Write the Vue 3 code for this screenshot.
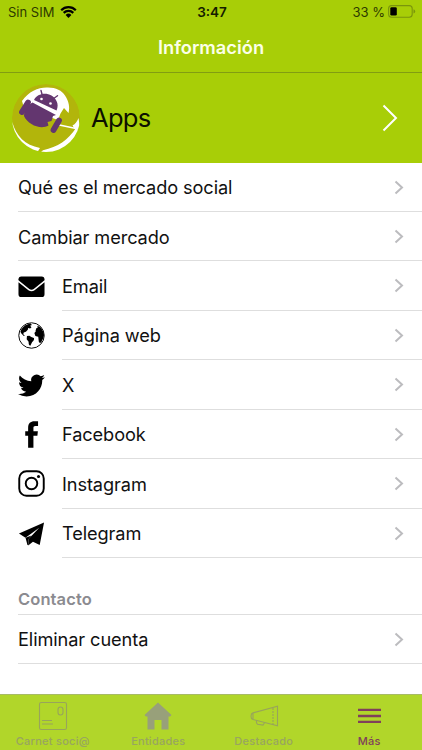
<template>
    <div class="screen">
        <div class="status">
            <div class="carrier">
                <span>Sin SIM</span>
                <svg class="wifi" viewBox="0 0 17 12">
                    <path d="M1.2 4.2a10.3 10.3 0 0 1 14.6 0" />
                    <path d="M3.7 6.9a6.8 6.8 0 0 1 9.6 0" />
                    <path class="dot" d="M5.6 9a4.1 4.1 0 0 1 5.8 0L8.500 12z" />
                </svg>
            </div>
            <b class="clock">3:47</b>
            <div class="power">
                <span>33 %</span>
                <svg class="battery" viewBox="0 0 28 13">
                    <rect class="shell" x=".6" y=".6" width="23.600" height="11.600" rx="3" />
                    <rect x="2.300" y="2.300" width="6.500" height="8.300" rx="1.300" />
                    <path class="tip" d="M25.500 4.300q1.700.6 1.700 2.100t-1.700 2.100z" />
                </svg>
            </div>
        </div>

        <h1 class="title">Información</h1>

        <div class="profile">
            <svg class="avatar" viewBox="0 0 68 68">
                <circle cx="34" cy="34" r="34" fill="#b2b50b" />
                <g fill="#fff">
                    <path d="M10 17C17 7 27 3 36 3.500c8 0 14 3 17 8 4 6 5 12 3.500 17.500l-4.500-5-3.500 5.500L46 36 12 24z" />
                    <path d="M.3 38C4 52 13 61 28 64L25.500 68H14L0 54z" />
                    <path d="M29 68l2-1.800C46 63 56 56 64 44l4 5-12 19z" />
                    <path d="M60.500 41.500c3-1.500 4.500-4 6-7.500L68 44l-4 3z" />
                </g>
                <path stroke="#fff" stroke-width="1.600" d="M45 40.500l19 4" />
                <g fill="#63366f">
                    <path d="M22 16C26 7.500 40 7.500 44.500 17c1.500 3 1.500 6 0 9.500z" />
                    <path d="M20.500 18.500L44 31l-3 1-1.500 5-4 1 1 3.500C29 46 16 41 12 32c0-5 4-11 8.500-13.500z" />
                </g>
                <path class="limbs" d="M16 18.500l-6 9.500M47 36.500L41.500 46" />
                <path class="antennae" d="M30.500 12l-1.500-5.500M41 15l4.500-3.300" />
                <g fill="#fff"><circle cx="29.500" cy="15" r="1.300" /><circle cx="38.500" cy="19.500" r="1.300" /></g>
            </svg>
            <span class="name">Apps</span>
            <svg class="go" viewBox="0 0 16 28"><path d="M1.500 1.500L14 14 1.500 26.500" /></svg>
        </div>

        <div class="list">
            <div v-for="row in rows" :key="row.label" class="row">
                <div v-if="row.icon" class="icon">
                    <svg v-if="row.icon == 'email'" viewBox="0 0 28 28">
                        <path d="M3.500 3.500h21q3 0 3 3v1L16.300 16.600q-2.300 1.700-4.600 0L.5 7.500v-1q0-3 3-3z" />
                        <path d="M.5 9.700l10.300 8.200q3.200 2.300 6.400 0L27.500 9.700V22q0 3-3 3h-21q-3 0-3-3z" />
                    </svg>
                    <svg v-if="row.icon == 'web'" viewBox="0 0 28 28">
                        <circle cx="14" cy="14" r="13.200" fill="#fff" stroke="#000" />
                        <path d="M3.500 7.500C6 4 9 2 13 1.500l1.500 1.500-2 .8 1.500 1.700-1.500 1.300-2-.6-.3 1.800-2 2.200-2.200.8-.6 1.700 1.700 1.300-1.100.5L3.500 12 2.500 10z" />
                        <path d="M9.300 14.500l2.500-.3 2 1.300 2.700 1c.8 1.500-.6 3.300-1.800 4.300l-1.900 3.700c-1.600 0-1.800-1.700-1.800-4L9 18z" />
                        <path d="M18.200 9l.8-2.500 1.500-.8-.5-1.700 3 1.200c2 2.200 3.800 5 4 8.500l-1 3.500-2 4c-1.500 1-2.500 0-2.500-1.500l-.5-4.500-3-.7-1-3 1.500-2z" />
                    </svg>
                    <svg v-if="row.icon == 'twitter'" viewBox="0 0 24 24">
                        <path d="M23.950 4.570a10 10 0 0 1-2.820.77 4.960 4.960 0 0 0 2.160-2.720c-.95.550-2 .95-3.130 1.180a4.920 4.920 0 0 0-8.380 4.480C7.690 8.090 4.070 6.130 1.640 3.160a4.820 4.820 0 0 0-.67 2.480c0 1.710.87 3.210 2.190 4.100a4.900 4.900 0 0 1-2.230-.62v.06a4.920 4.920 0 0 0 3.950 4.830 5 5 0 0 1-2.210.08 4.940 4.940 0 0 0 4.600 3.420A9.870 9.870 0 0 1 0 19.540a14 14 0 0 0 7.550 2.210c9.050 0 14-7.500 14-13.980 0-.21 0-.42-.02-.63a9.940 9.940 0 0 0 2.420-2.570z" />
                    </svg>
                    <svg v-if="row.icon == 'facebook'" viewBox="0 0 28 28">
                        <path d="M10.500 27.700V15.200H7.500v-4.700h3V7c0-4.500 2.500-6.700 6.500-6.700h3.800v5H18c-1.400 0-2 .7-2 2v3.200h4.600l-.5 4.700H16v12.500z" />
                    </svg>
                    <svg v-if="row.icon == 'instagram'" class="outline" viewBox="0 0 28 28">
                        <rect x="1.300" y="1.300" width="25.400" height="25.400" rx="7.500" />
                        <circle cx="14" cy="14" r="6" />
                        <circle class="lens" cx="21.300" cy="6.800" r="1.600" />
                    </svg>
                    <svg v-if="row.icon == 'telegram'" viewBox="0 0 28 28">
                        <path d="M1 14L27 2.500l-4.500 23.500-7-3.500-4.300 3.500-.5-6L22 8 7.800 18.500z" />
                        <path d="M7.800 18.500l2 7.500 1.500.3-.6-6L14 16z" />
                    </svg>
                </div>
                <div class="cell">
                    <span>{{ row.label }}</span>
                    <svg class="chevron" viewBox="0 0 10 15"><path d="M1.500 1.500L8 7.500l-6.500 6" /></svg>
                </div>
            </div>

            <h2 class="section">Contacto</h2>
            <div class="row">
                <div class="cell">
                    <span>Eliminar cuenta</span>
                    <svg class="chevron" viewBox="0 0 10 15"><path d="M1.500 1.500L8 7.500l-6.500 6" /></svg>
                </div>
            </div>
        </div>

        <div class="tabs">
            <div class="tab">
                <svg viewBox="0 0 30 30">
                    <rect x="1.500" y="1.500" width="27" height="27" rx="1.800" />
                    <rect x="20" y="6" width="5" height="8" rx="2.500" />
                    <path d="M4 19.500h10M4 23h11" />
                </svg>
                <span>Carnet soci@</span>
            </div>
            <div class="tab">
                <svg viewBox="0 0 30 30">
                    <path class="fill" d="M15 1.500L28.500 14l-1.300 1.500h-1.700v13h-7V19h-7v9.500h-7v-13H2.800L1.500 14z" />
                </svg>
                <span>Entidades</span>
            </div>
            <div class="tab">
                <svg viewBox="0 0 30 30">
                    <path d="M28.500 5.200v19.600L4 18.500q-2-.6-2-3.300t2-3.300zM4 12v6.500" />
                    <path d="M7.500 19.500v2.300l1 1.500 5.500.8 1.500-2.300" />
                    <path class="dash" d="M24 7v17" />
                </svg>
                <span>Destacado</span>
            </div>
            <div class="tab active">
                <svg viewBox="0 0 30 30"><path class="bars" d="M4 8.800h23M4 15h23M4 20.800h23" /></svg>
                <span>Más</span>
            </div>
        </div>
    </div>
</template>

<script setup>
    const rows = [
        { label: "Qué es el mercado social" },
        { label: "Cambiar mercado" },
        { label: "Email", icon: "email" },
        { label: "Página web", icon: "web" },
        { label: "X", icon: "twitter" },
        { label: "Facebook", icon: "facebook" },
        { label: "Instagram", icon: "instagram" },
        { label: "Telegram", icon: "telegram" }
    ];
</script>

<style>
    body{
        margin: 0;
        overflow: hidden;
    }
</style>

<style scoped>
    .screen{
        width: 422px;
        height: 750px;
        display: flex;
        flex-direction: column;
        background-color: #fff;
        color: #111;
        font-family: Inter, "Liberation Sans", sans-serif;
    }
    .screen svg{
        display: block;
        flex: none;
    }
    .status{
        height: 24px;
        box-sizing: border-box;
        padding: 0 6px 0 8px;
        display: grid;
        grid-template-columns: 1fr auto 1fr;
        align-items: center;
        background-color: #a8ce07;
        color: #2e3a00;
        font-size: 13px;
    }
    .carrier, .power{
        display: flex;
        align-items: center;
        gap: 6px;
    }
    .power{
        justify-content: flex-end;
        gap: 3px;
    }
    .clock{
        font-weight: 600;
        font-size: 13.5px;
        color: #151c00;
    }
    .wifi{
        width: 17px;
        height: 12px;
        fill: none;
        stroke: #000;
        stroke-width: 2.2;
    }
    .wifi .dot{
        fill: #000;
        stroke: none;
    }
    .battery{
        width: 28px;
        height: 13px;
        margin-top: -1px;
    }
    .battery .shell{
        fill: none;
        stroke: #7a950c;
        stroke-width: 1.1;
    }
    .battery .tip{
        fill: #7a950c;
    }
    .title{
        margin: 0;
        height: 49px;
        box-sizing: border-box;
        border-bottom: 1px solid #829d12;
        background-color: #a8ce07;
        color: #fbffe8;
        text-align: center;
        font-size: 18.3px;
        font-weight: 600;
        line-height: 47px;
    }
    .profile{
        height: 89.6px;
        padding: 0 24px 0 12px;
        display: flex;
        align-items: center;
        background-color: #a8ce07;
    }
    .avatar{
        width: 68px;
        height: 68px;
        border-radius: 50%;
        overflow: hidden;
    }
    .limbs{
        stroke: #63366f;
        stroke-width: 5.8;
        stroke-linecap: round;
    }
    .antennae{
        stroke: #63366f;
        stroke-width: 1.4;
        stroke-linecap: round;
    }
    .name{
        margin-left: 11px;
        flex: 1;
        font-size: 25.5px;
        letter-spacing: -0.7px;
        color: #0c1000;
    }
    .go{
        width: 16px;
        height: 28px;
        fill: none;
        stroke: #fff;
        stroke-width: 2;
    }
    .list{
        flex: 1;
        padding-left: 18px;
    }
    .row{
        height: 49.45px;
        display: flex;
        font-size: 18.2px;
        letter-spacing: -0.1px;
    }
    .icon{
        width: 44px;
        display: flex;
        align-items: center;
    }
    .icon svg{
        width: 27px;
        height: 27px;
    }
    .outline{
        fill: none;
        stroke: #000;
        stroke-width: 2;
    }
    .outline .lens{
        fill: #000;
        stroke: none;
    }
    .cell{
        flex: 1;
        display: flex;
        align-items: center;
        justify-content: space-between;
        padding-right: 18.5px;
        padding-top: 0.6px;
        border-bottom: 1px solid #dedede;
    }
    .chevron{
        width: 10px;
        height: 15px;
        fill: none;
        stroke: #bcbcbf;
        stroke-width: 2;
    }
    .section{
        margin: 0;
        height: 56.5px;
        box-sizing: border-box;
        padding-top: 29.5px;
        border-bottom: 1px solid #dedede;
        color: #8b8b90;
        font-size: 16.5px;
        letter-spacing: 0.1px;
        line-height: 22px;
        font-weight: 600;
    }
    .tabs{
        height: 56px;
        box-sizing: border-box;
        border-top: 1px solid #a8bb65;
        display: grid;
        grid-template-columns: repeat(4, 1fr);
        background-color: #b1d62a;
    }
    .tab{
        padding-top: 6px;
        display: flex;
        flex-direction: column;
        align-items: center;
        color: #98a560;
        font-size: 11px;
        line-height: 12px;
        font-weight: 500;
        letter-spacing: 0.25px;
    }
    .tab svg{
        width: 30px;
        height: 30px;
        margin-bottom: 4px;
        fill: none;
        stroke: #98a45b;
        stroke-width: 1.1;
    }
    .tab .fill{
        fill: #98a07a;
        stroke: none;
    }
    .tab .dash{
        stroke-dasharray: 2 1;
    }
    .tab .bars{
        stroke: #80405b;
        stroke-width: 2.3;
    }
    .active{
        color: #80405b;
    }
</style>
